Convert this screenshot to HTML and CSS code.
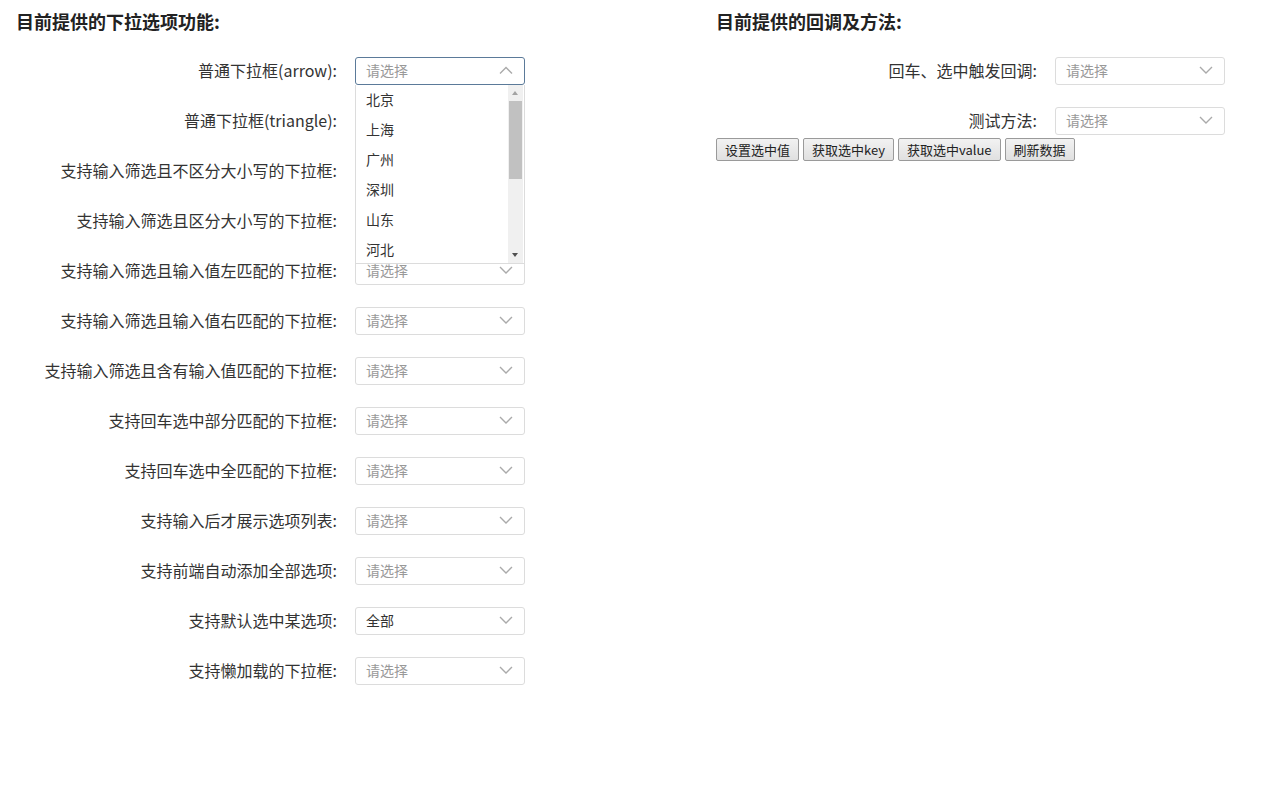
FILE: index.html
```html
<!DOCTYPE html>
<html lang="zh">
<head>
<meta charset="utf-8">
<title>下拉选项</title>
<link rel="stylesheet" href="styles.css">
</head>
<body>
<div class="page">
  <section class="col">
    <h3 class="title">目前提供的下拉选项功能:</h3>
    <div class="row">
      <label class="lbl">普通下拉框(arrow):</label>
      <div class="sel focus">
        <span class="ph">请选择</span>
        <svg class="chev" width="14" height="8" viewBox="0 0 14 8"><path d="M1 7.5 L7 1.5 L13 7.5" fill="none" stroke="#aaa" stroke-width="1.4"/></svg>
        <div class="drop">
          <ul class="opts">
            <li>北京</li><li>上海</li><li>广州</li><li>深圳</li><li>山东</li><li>河北</li><li>河南</li>
          </ul>
          <div class="sb">
            <span class="sb-up"></span>
            <span class="sb-thumb"></span>
            <span class="sb-down"></span>
          </div>
        </div>
      </div>
    </div>
    <div class="row">
      <label class="lbl">普通下拉框(triangle):</label>
      <div class="sel"><span class="ph">请选择</span><svg class="chev" width="14" height="8" viewBox="0 0 14 8"><path d="M1 1 L7 7 L13 1" fill="none" stroke="#aaa" stroke-width="1.4"/></svg></div>
    </div>
    <div class="row">
      <label class="lbl">支持输入筛选且不区分大小写的下拉框:</label>
      <div class="sel"><span class="ph">请选择</span><svg class="chev" width="14" height="8" viewBox="0 0 14 8"><path d="M1 1 L7 7 L13 1" fill="none" stroke="#aaa" stroke-width="1.4"/></svg></div>
    </div>
    <div class="row">
      <label class="lbl">支持输入筛选且区分大小写的下拉框:</label>
      <div class="sel"><span class="ph">请选择</span><svg class="chev" width="14" height="8" viewBox="0 0 14 8"><path d="M1 1 L7 7 L13 1" fill="none" stroke="#aaa" stroke-width="1.4"/></svg></div>
    </div>
    <div class="row">
      <label class="lbl">支持输入筛选且输入值左匹配的下拉框:</label>
      <div class="sel"><span class="ph">请选择</span><svg class="chev" width="14" height="8" viewBox="0 0 14 8"><path d="M1 1 L7 7 L13 1" fill="none" stroke="#aaa" stroke-width="1.4"/></svg></div>
    </div>
    <div class="row">
      <label class="lbl">支持输入筛选且输入值右匹配的下拉框:</label>
      <div class="sel"><span class="ph">请选择</span><svg class="chev" width="14" height="8" viewBox="0 0 14 8"><path d="M1 1 L7 7 L13 1" fill="none" stroke="#aaa" stroke-width="1.4"/></svg></div>
    </div>
    <div class="row">
      <label class="lbl">支持输入筛选且含有输入值匹配的下拉框:</label>
      <div class="sel"><span class="ph">请选择</span><svg class="chev" width="14" height="8" viewBox="0 0 14 8"><path d="M1 1 L7 7 L13 1" fill="none" stroke="#aaa" stroke-width="1.4"/></svg></div>
    </div>
    <div class="row">
      <label class="lbl">支持回车选中部分匹配的下拉框:</label>
      <div class="sel"><span class="ph">请选择</span><svg class="chev" width="14" height="8" viewBox="0 0 14 8"><path d="M1 1 L7 7 L13 1" fill="none" stroke="#aaa" stroke-width="1.4"/></svg></div>
    </div>
    <div class="row">
      <label class="lbl">支持回车选中全匹配的下拉框:</label>
      <div class="sel"><span class="ph">请选择</span><svg class="chev" width="14" height="8" viewBox="0 0 14 8"><path d="M1 1 L7 7 L13 1" fill="none" stroke="#aaa" stroke-width="1.4"/></svg></div>
    </div>
    <div class="row">
      <label class="lbl">支持输入后才展示选项列表:</label>
      <div class="sel"><span class="ph">请选择</span><svg class="chev" width="14" height="8" viewBox="0 0 14 8"><path d="M1 1 L7 7 L13 1" fill="none" stroke="#aaa" stroke-width="1.4"/></svg></div>
    </div>
    <div class="row">
      <label class="lbl">支持前端自动添加全部选项:</label>
      <div class="sel"><span class="ph">请选择</span><svg class="chev" width="14" height="8" viewBox="0 0 14 8"><path d="M1 1 L7 7 L13 1" fill="none" stroke="#aaa" stroke-width="1.4"/></svg></div>
    </div>
    <div class="row">
      <label class="lbl">支持默认选中某选项:</label>
      <div class="sel"><span class="val">全部</span><svg class="chev" width="14" height="8" viewBox="0 0 14 8"><path d="M1 1 L7 7 L13 1" fill="none" stroke="#aaa" stroke-width="1.4"/></svg></div>
    </div>
    <div class="row">
      <label class="lbl">支持懒加载的下拉框:</label>
      <div class="sel"><span class="ph">请选择</span><svg class="chev" width="14" height="8" viewBox="0 0 14 8"><path d="M1 1 L7 7 L13 1" fill="none" stroke="#aaa" stroke-width="1.4"/></svg></div>
    </div>
  </section>
  <section class="col col-right">
    <h3 class="title">目前提供的回调及方法:</h3>
    <div class="row">
      <label class="lbl">回车、选中触发回调:</label>
      <div class="sel"><span class="ph">请选择</span><svg class="chev" width="14" height="8" viewBox="0 0 14 8"><path d="M1 1 L7 7 L13 1" fill="none" stroke="#aaa" stroke-width="1.4"/></svg></div>
    </div>
    <div class="row">
      <label class="lbl">测试方法:</label>
      <div class="sel"><span class="ph">请选择</span><svg class="chev" width="14" height="8" viewBox="0 0 14 8"><path d="M1 1 L7 7 L13 1" fill="none" stroke="#aaa" stroke-width="1.4"/></svg></div>
    </div>
    <div class="btns">
      <button class="btn">设置选中值</button>
      <button class="btn">获取选中key</button>
      <button class="btn">获取选中value</button>
      <button class="btn">刷新数据</button>
    </div>
  </section>
</div>
</body>
</html>
```
FILE: styles.css
```css
html, body {
  margin: 0;
  padding: 0;
  background: #fff;
}
body {
  font-family: "Noto Sans CJK SC", "Noto Sans", sans-serif;
  color: #333;
}
.page {
  display: flex;
  padding: 0 16px;
}
.col {
  width: 700px;
  flex: none;
}
.col-right {
  flex: 1;
  width: auto;
  min-width: 0;
}
.title {
  margin: 8px 0 0;
  font-size: 18px;
  line-height: 26px;
  font-weight: bold;
  color: #222;
}
.row {
  display: flex;
  align-items: center;
  margin-top: 22px;
  height: 28px;
}
.title + .row {
  margin-top: 23px;
}
.lbl {
  width: 321px;
  padding-right: 18px;
  padding-bottom: 3px;
  text-align: right;
  font-size: 16px;
  color: #333;
  white-space: nowrap;
}
.sel {
  position: relative;
  box-sizing: border-box;
  width: 170px;
  height: 28px;
  border: 1px solid #dcdcdc;
  border-radius: 3px;
  background: #fff;
  display: flex;
  align-items: center;
  padding-left: 10px;
  padding-bottom: 2px;
  font-size: 14px;
}
.sel.focus {
  border-color: #5b7a99;
  z-index: 2;
}
.ph {
  color: #999;
  flex: 1;
}
.val {
  color: #333;
  flex: 1;
}
.chev {
  margin-right: 11px;
}
.drop {
  position: absolute;
  left: -1px;
  top: 27px;
  width: 170px;
  height: 179px;
  box-sizing: border-box;
  border: 1px solid #dcdcdc;
  border-top: none;
  background: #fff;
  overflow: hidden;
}
.opts {
  list-style: none;
  margin: 0;
  padding: 0;
}
.opts li {
  height: 30px;
  line-height: 28px;
  padding-bottom: 2px;
  box-sizing: border-box;
  padding-left: 10px;
  font-size: 14px;
  color: #333;
}
.sb {
  position: absolute;
  right: 1px;
  top: 0;
  bottom: 0;
  width: 15px;
  background: #f0f0f0;
  display: flex;
  flex-direction: column;
  align-items: center;
}
.sb-up, .sb-down {
  flex: none;
  height: 16px;
  width: 15px;
  position: relative;
}
.sb-up::after, .sb-down::after {
  content: "";
  position: absolute;
  left: 4px;
  width: 0;
  height: 0;
  border-left: 3.5px solid transparent;
  border-right: 3.5px solid transparent;
}
.sb-up::after {
  top: 6px;
  border-bottom: 4px solid #a3a3a3;
}
.sb-down::after {
  top: 6px;
  border-top: 4px solid #505050;
}
.sb-thumb {
  flex: none;
  width: 13px;
  height: 78px;
  background: #c1c1c1;
}
.sb-thumb + .sb-down {
  margin-top: auto;
}
.btns {
  display: flex;
  gap: 4px;
  margin-top: 3px;
}
.btn {
  font-family: "Noto Sans CJK SC", "Noto Sans", sans-serif;
  font-size: 13px;
  height: 23px;
  line-height: 18px;
  padding: 0 8px;
  border: 1px solid #9a9a9a;
  border-radius: 2px;
  background: linear-gradient(#f2f2f2, #e0e0e0);
  color: #222;
}
```
